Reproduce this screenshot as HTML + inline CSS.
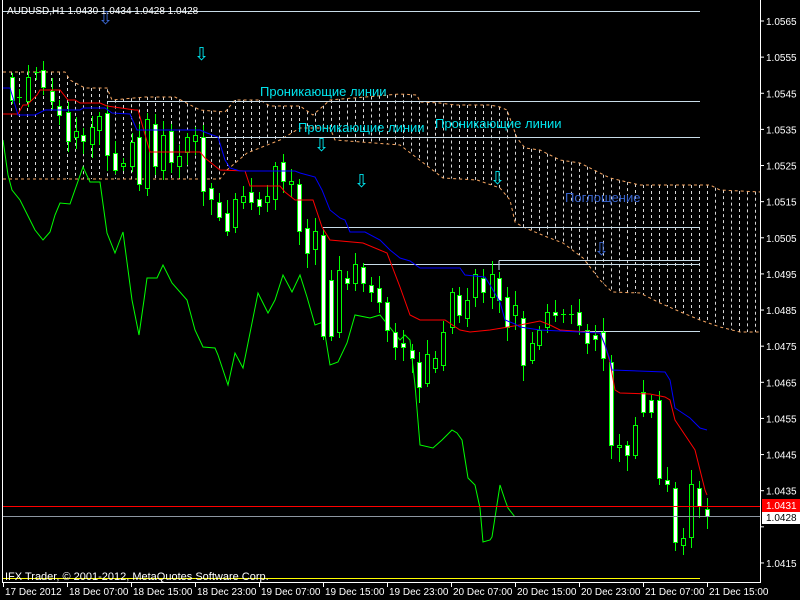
<!DOCTYPE html>
<html><head><meta charset="utf-8">
<style>
html,body{margin:0;padding:0;background:#000;width:800px;height:600px;overflow:hidden}
svg{display:block}
text{font-family:"Liberation Sans","DejaVu Sans",sans-serif}
</style></head>
<body>
<svg id="c" width="800" height="600" viewBox="0 0 800 600" xmlns="http://www.w3.org/2000/svg">
<rect width="800" height="600" fill="#000"/>
<g id="cloud"></g>
<polyline fill="none" stroke="#f4a460" stroke-width="1" stroke-dasharray="3,3" points="3,72 45,72 65,72 70,80 85,88 107,88 112,100 145,97 175,97 200,110 225,112 235,100 260,100 270,106 300,106 313,115 330,100 400,94 417,95 420,102 440,103 455,105 490,105 500,107 507,110 517,138 525,148 540,150 550,155 560,160 580,163 590,168 610,178 640,185 710,185 720,190 760,192"/>
<polyline fill="none" stroke="#f4a460" stroke-width="1" stroke-dasharray="3,3" points="3,179 220,179 227,170 247,153 280,140 300,128 330,128 335,140 400,145 443,178 477,180 500,188 510,200 515,222 523,227 547,237 563,243 583,258 600,280 612,292 640,293 660,303 683,313 700,320 720,327 740,332 760,332"/>
<g stroke="#c8dce8" stroke-width="1" fill="none">
<line x1="3" y1="11.5" x2="700" y2="11.5"/>
<line x1="107" y1="101.5" x2="700" y2="101.5"/>
<line x1="200" y1="137.5" x2="700" y2="137.5"/>
<line x1="323" y1="227.5" x2="700" y2="227.5"/>
<line x1="499" y1="260.5" x2="700" y2="260.5"/>
<line x1="499" y1="260.5" x2="499" y2="270"/>
<line x1="363" y1="264.5" x2="700" y2="264.5"/>
<line x1="578" y1="331.5" x2="700" y2="331.5"/>
</g>
<polyline fill="none" stroke="#00ff00" stroke-width="1" points="3,140 8,175 12,190 20,200 35,230 43,240 50,232 55,215 60,203 70,204 83,167 90,182 100,182 107,233 115,253 123,232 132,300 139,335 144,300 147,278 157,278 163,265 172,283 187,300 195,330 203,347 215,348 218,355 228,385 235,353 243,368 258,293 268,313 275,300 283,275 292,292 300,275 307,297 315,325 323,322 330,365 338,362 347,343 355,315 370,318 380,315 400,340 405,335 410,340 415,385 420,445 433,448 442,440 452,430 457,433 462,440 468,478 475,485 480,508 483,542 490,540 492,537 500,485 505,500 508,508 515,517"/>
<g id="candles"></g>
<polyline fill="none" stroke="#ff0000" stroke-width="1" points="3,114 18,114 23,105 27,105 37,95 40,90 60,90 68,100 75,100 80,103 100,103 107,106 135,110 138,110 150,152 200,152 205,158 220,170 245,171 250,186 280,186 285,192 295,200 313,200 322,227 330,240 363,243 387,253 400,287 410,315 420,320 445,320 460,330 470,332 490,330 520,325 540,321 550,325 560,330 600,333 605,345 610,362 615,390 620,393 650,394 665,397 670,400 675,420 685,435 695,450 705,490 707,495"/>
<polyline fill="none" stroke="#0000ff" stroke-width="1" points="3,88 10,88 13,98 18,115 35,115 45,110 80,110 83,108 105,108 112,113 130,114 137,130 200,130 207,133 218,137 225,160 230,168 240,171 295,171 300,173 315,177 322,190 330,210 340,218 345,220 350,232 365,232 380,240 390,250 400,258 410,261 420,268 460,268 465,275 485,277 490,285 500,302 505,320 515,324 520,327 540,330 600,333 605,345 610,360 612,370 665,372 670,380 675,408 690,418 700,428 707,430"/>
<line x1="3" y1="506.5" x2="760" y2="506.5" stroke="#ff0000"/>
<line x1="3" y1="516.5" x2="760" y2="516.5" stroke="#8c96a0"/>
<line x1="3" y1="578.5" x2="700" y2="578.5" stroke="#ffff00"/>
<g font-size="13" fill="#00e5ee">
<text x="260" y="96">Проникающие линии</text>
<text x="298" y="132">Проникающие линии</text>
<text x="435" y="128">Проникающие линии</text>
</g>
<text x="565" y="202" font-size="13" fill="#3a66d0">Поглощение</text>
<g font-size="18">
<text x="98" y="24" fill="#3a66d0">⇩</text>
<text x="194" y="60" fill="#00e5ee">⇩</text>
<text x="314" y="151" fill="#00e5ee">⇩</text>
<text x="354" y="187" fill="#00e5ee">⇩</text>
<text x="490" y="184" fill="#00e5ee">⇩</text>
<text x="594" y="255" fill="#3a66d0">⇩</text>
</g>
<text x="7" y="14" font-size="10" fill="#fff">AUDUSD,H1  1.0430 1.0434 1.0428 1.0428</text>
<text x="5" y="580" font-size="11" fill="#fff">IFX Trader, © 2001-2012, MetaQuotes Software Corp.</text>
<line x1="2.5" y1="0" x2="2.5" y2="582" stroke="#fff"/>
<line x1="760.5" y1="0" x2="760.5" y2="582" stroke="#fff"/>
<line x1="2" y1="582.5" x2="761" y2="582.5" stroke="#fff"/>
<g id="axis" font-size="10" fill="#fff"></g>
<rect x="762" y="499" width="38" height="13" fill="#ff0000"/>
<rect x="762" y="512" width="38" height="12" fill="#fff"/>
<text x="766" y="509" font-size="10" fill="#fff">1.0431</text>
<text x="766" y="521" font-size="10" fill="#000">1.0428</text>
</svg>
<script>
var NS="http://www.w3.org/2000/svg";
function el(p,t,a,txt){var e=document.createElementNS(NS,t);for(var k in a)e.setAttribute(k,a[k]);if(txt)e.textContent=txt;p.appendChild(e);return e;}
var up=[[3,72],[45,72],[65,72],[70,80],[85,88],[107,88],[112,100],[145,97],[175,97],[200,110],[225,112],[235,100],[260,100],[270,106],[300,106],[313,115],[330,100],[400,94],[417,95],[420,102],[440,103],[455,105],[490,105],[500,107],[507,110],[517,138],[525,148],[540,150],[550,155],[560,160],[580,163],[590,168],[610,178],[640,185],[710,185],[720,190],[760,192]];
var lo=[[3,179],[220,179],[227,170],[247,153],[280,140],[300,128],[330,128],[335,140],[400,145],[443,178],[477,180],[500,188],[510,200],[515,222],[523,227],[547,237],[563,243],[583,258],[600,280],[612,292],[640,293],[660,303],[683,313],[700,320],[720,327],[740,332],[760,332]];
function at(a,x){for(var i=1;i<a.length;i++){if(x<=a[i][0]){var t=(x-a[i-1][0])/(a[i][0]-a[i-1][0]);return a[i-1][1]+t*(a[i][1]-a[i-1][1]);}}return a[a.length-1][1];}
var cg=document.getElementById('cloud');
for(var x=11.5;x<760;x+=8){var a=at(up,x),b=at(lo,x);el(cg,'line',{x1:x,y1:Math.min(a,b),x2:x,y2:Math.max(a,b),stroke:'#d8d8d8','stroke-dasharray':'3,3','stroke-width':1});}
var C=[[12,77,100,1],[19,97,98,0],[28,77,101,0],[36,72,73,0],[43,70,87,1],[52,91,101,1],[59,106,115,1],[68,112,141,1],[76,131,137,0],[83,135,141,1],[92,127,144,0],[99,116,130,0],[107,113,155,1],[115,153,170,1],[123,163,166,0],[132,142,166,0],[139,137,184,1],[147,119,188,0],[155,124,166,1],[163,135,170,0],[171,131,162,1],[179,156,166,0],[187,137,152,0],[195,135,141,0],[203,137,191,1],[211,188,199,1],[219,202,217,1],[227,213,231,1],[235,199,227,0],[243,196,202,0],[251,192,202,1],[259,199,206,1],[267,196,202,0],[275,166,199,0],[283,162,181,1],[291,181,184,0],[299,184,231,1],[307,228,253,1],[315,231,249,0],[323,235,336,1],[331,280,336,1],[339,270,332,0],[347,278,283,1],[355,264,283,0],[363,267,283,1],[371,285,292,1],[379,288,302,1],[387,302,330,1],[395,332,347,1],[403,343,347,1],[412,350,358,1],[419,362,387,1],[427,354,383,0],[435,358,368,0],[443,332,365,0],[452,292,327,0],[459,295,315,1],[467,300,318,0],[475,274,297,0],[483,278,292,1],[492,274,297,0],[499,278,300,1],[507,297,327,1],[515,305,315,0],[523,318,365,1],[532,343,360,0],[539,330,345,0],[547,312,327,0],[555,312,315,1],[563,314,315,0],[571,314,315,0],[579,312,325,1],[587,330,343,1],[595,335,339,1],[603,332,358,1],[611,362,445,1],[619,445,447,0],[627,445,455,1],[635,425,455,0],[643,392,412,1],[651,400,412,1],[659,400,478,1],[667,480,484,1],[675,488,542,1],[683,538,545,0],[691,484,537,0],[699,488,506,1],[707,509,516,1]];
var g=document.getElementById('candles');
C.forEach(function(c,i){var w=(i*37)%11+4,w2=(i*53)%13+4;
el(g,'line',{x1:c[0]+.5,y1:c[1]-w,x2:c[0]+.5,y2:c[2]+w2,stroke:'#00ff00'});
if(c[2]-c[1]<2){el(g,'line',{x1:c[0]-2,y1:c[1]+.5,x2:c[0]+3,y2:c[1]+.5,stroke:'#00ff00'});}
else el(g,'rect',{x:c[0]-1.5,y:c[1]+.5,width:4,height:c[2]-c[1],fill:c[3]?'#fff':'#000',stroke:'#00ff00'});});
var ax=document.getElementById('axis');
for(var k=0;k<16;k++){var p=(1.0565-k*0.001).toFixed(4),y=21+k*36.13;
el(ax,'line',{x1:760,y1:y,x2:764,y2:y,stroke:'#fff'});
if(k!=14)el(ax,'text',{x:766,y:y+4},p);}
var L=["17 Dec 2012","18 Dec 07:00","18 Dec 15:00","18 Dec 23:00","19 Dec 07:00","19 Dec 15:00","19 Dec 23:00","20 Dec 07:00","20 Dec 15:00","20 Dec 23:00","21 Dec 07:00","21 Dec 15:00"];
L.forEach(function(s,i){var x=3+64*i;el(ax,'line',{x1:x+.5,y1:582,x2:x+.5,y2:587,stroke:'#fff'});el(ax,'text',{x:x+2,y:595},s);});
</script>
</body></html>
